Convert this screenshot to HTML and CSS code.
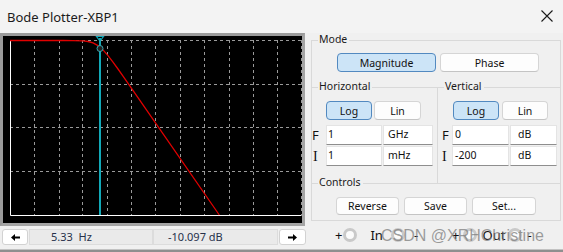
FILE: index.html
```html
<!DOCTYPE html>
<html>
<head>
<meta charset="utf-8">
<link rel="stylesheet" href="styles.css">
</head>
<body>
<div class="win">
  <div class="titlebar">
    <span class="title">Bode Plotter-XBP1</span>
    <svg class="close" width="12" height="12" viewBox="0 0 12 12"><path d="M0.5 0.5L11.5 11.5M11.5 0.5L0.5 11.5" stroke="#1a1a1a" stroke-width="1.1" fill="none"/></svg>
  </div>
  <div class="main">
    <div class="left">
      <div class="plot">
        <svg width="299" height="187" viewBox="0 0 299 187">
          <g stroke="#9a9a9a" stroke-width="1" stroke-dasharray="3 3" fill="none">
            <path d="M7 4.5H298.5M7 48.5H298.5M7 91.5H298.5M7 135.5H298.5"/>
            <path d="M31.5 4V179M56.5 4V179M79.5 4V179M104.5 4V179M128.5 4V179M152.5 4V179M177.5 4V179M201.5 4V179M226.5 4V179M250.5 4V179M274.5 4V179M298.5 4V179"/>
          </g>
          <path d="M7.5 4V179.5H298.5" stroke="#ffffff" stroke-width="1" fill="none"/>
          <path d="M7 4.5L60 4.5L70 4.6L80 4.9L85 5.5L90 6.9L95 9.6L100 13.9L105 19.6L110 26.1L115 33L120 40.1L127 50.1L140 68.9L216.3 179" stroke="#e00000" stroke-width="1.3" fill="none"/>
          <rect x="96" y="2" width="2" height="177" fill="#12a9b8"/>
          <path d="M93.5 0.5H100.5L97 5Z" stroke="#12a9b8" stroke-width="1.2" fill="none"/>
          <circle cx="97" cy="12.5" r="3" stroke="#3aa7b0" stroke-width="1" fill="#222"/>
        </svg>
      </div>
      <div class="readout">
        <div class="arrow"><svg width="9" height="7" viewBox="0 0 9 7"><path d="M0 3.5L4 0V2.4H9V4.6H4V7Z" fill="#000"/></svg></div>
        <div class="field f1">5.33&nbsp; Hz</div>
        <div class="field f2">-10.097 dB</div>
        <div class="arrow right"><svg width="9" height="7" viewBox="0 0 9 7"><path d="M9 3.5L5 0V2.4H0V4.6H5V7Z" fill="#000"/></svg></div>
      </div>
    </div>
    <div class="right">
      <div class="panel">
        <div class="hdr"><span>Mode</span></div>
        <div class="mode">
          <div class="btn on">Magnitude</div>
          <div class="btn">Phase</div>
        </div>
        <div class="hv">
          <div class="col h">
            <div class="hdr"><span>Horizontal</span></div>
            <div class="loglin">
              <div class="btn on b-log">Log</div>
              <div class="btn b-lin">Lin</div>
            </div>
            <div class="inrow">
              <span class="lbl">F</span>
              <div class="in val">1</div>
              <div class="in unit">GHz</div>
            </div>
            <div class="inrow second">
              <span class="lbl serif">I</span>
              <div class="in val">1</div>
              <div class="in unit">mHz</div>
            </div>
          </div>
          <div class="col v">
            <div class="hdr"><span>Vertical</span></div>
            <div class="loglin">
              <div class="btn on b-log">Log</div>
              <div class="btn b-lin">Lin</div>
            </div>
            <div class="inrow">
              <span class="lbl">F</span>
              <div class="in val">0</div>
              <div class="in unit">dB</div>
            </div>
            <div class="inrow second">
              <span class="lbl serif">I</span>
              <div class="in val">-200</div>
              <div class="in unit">dB</div>
            </div>
          </div>
        </div>
        <div class="hdr"><span>Controls</span></div>
        <div class="ctl">
          <div class="btn w63">Reverse</div>
          <div class="btn w63">Save</div>
          <div class="btn w64">Set...</div>
        </div>
      </div>
      <div class="terms">
        <span class="t-plus">+</span>
        <span class="term c1"></span>
        <span class="t-in">In</span>
        <span class="term c2"></span>
        <span class="t-minus">-</span>
        <span class="t-plus2">+</span>
        <span class="term c3"></span>
        <span class="t-out">Out</span>
        <span class="term c4"></span>
        <span class="t-minus2">-</span>
      </div>
    </div>
  </div>
  <div class="foot"></div>
  <div class="wm">CSDN @XRHChristine</div>
</div>
</body>
</html>
```

FILE: styles.css
```css
* { box-sizing: border-box; }

body {
  margin: 0;
  width: 563px;
  height: 252px;
  overflow: hidden;
  background: #f0f0f0;
  font-family: "Noto Sans", sans-serif;
  font-size: 10.5px;
  color: #1a1a1a;
}

.win {
  position: relative;
  width: 563px;
  height: 252px;
  display: flex;
  flex-direction: column;
}

.titlebar {
  height: 33px;
  flex: none;
  background: #f3f3f3;
  display: flex;
  align-items: center;
  justify-content: space-between;
  padding: 0 10px 0 7px;
}

.title {
  font-size: 13px;
  color: #1b1b1b;
}

.close {
  display: block;
  margin-top: -2px;
}

.main {
  flex: 1;
  display: flex;
}

.left {
  width: 310px;
  flex: none;
}

.plot {
  width: 305px;
  height: 193px;
  border: 3px solid #a4a4a4;
  border-top-color: #9a9a9a;
  border-left-color: #9a9a9a;
  background: #000;
}

.plot svg { display: block; }

.readout {
  display: flex;
  margin-top: 3px;
  height: 16px;
}

.arrow {
  width: 26px;
  height: 16px;
  margin-left: 2px;
  background: #fff;
  border: 1px solid #d2d2d2;
  border-radius: 3px;
  display: flex;
  align-items: center;
  justify-content: center;
}

.arrow.right {
  width: 27px;
  margin-left: 1px;
}

.field {
  height: 16px;
  background: #eaeaea;
  border: 1px solid #dcdcdc;
  line-height: 10px;
  font-size: 11px;
  color: #27314a;
  padding-top: 2px;
}

.f1 { width: 124px; margin-left: 1px; padding-left: 21px; }
.f2 { width: 125px; padding-left: 14px; }

.right {
  width: 253px;
  flex: none;
  display: flex;
  flex-direction: column;
}

.panel {
  margin: 7px 0 0 1px;
  width: 250px;
  border: 1px solid #d9d9d9;
  border-top: none;
  padding-bottom: 5px;
  display: flex;
  flex-direction: column;
}

.hdr {
  display: flex;
  align-items: center;
  height: 15px;
  margin-top: -7px;
}

.hdr::before {
  content: "";
  width: 6px;
  border-top: 1px solid #d9d9d9;
}

.hdr::after {
  content: "";
  flex: 1;
  border-top: 1px solid #d9d9d9;
}

.hdr span {
  align-self: flex-start;
  line-height: 13px;
  padding: 0 2px 0 1px;
}

.btn {
  height: 19px;
  background: #fdfdfd;
  border: 1px solid #d5d5d5;
  border-bottom-color: #c4c4c4;
  border-radius: 4px;
  display: flex;
  align-items: center;
  justify-content: center;
  color: #111;
}

.btn.on {
  background: #cce4f7;
  border-color: #5289c0;
}

.mode {
  display: flex;
  gap: 4px;
  margin: 5px 0 0 25px;
}

.mode .btn { width: 99px; }

.hv {
  display: flex;
  margin-top: 15px;
  padding-bottom: 0;
}

.col {
  display: flex;
  flex-direction: column;
  padding-bottom: 17px;
}

.col.h {
  width: 126px;
  border-right: 1px solid #d9d9d9;
}

.col.v { flex: 1; }

.loglin {
  display: flex;
  margin-top: 6px;
}

.col.h .loglin { margin-left: 14px; gap: 2px; }
.col.v .loglin { margin-left: 15px; gap: 3px; }

.b-log { width: 46px; }
.col.h .b-lin { width: 47px; }
.col.v .b-lin { width: 46px; }

.inrow {
  display: flex;
  height: 20px;
  margin-top: 5px;
  gap: 1px;
}

.inrow.second { margin-top: 1px; }

.lbl {
  width: 14px;
  font-size: 13px;
  line-height: 20px;
  color: #111;
}

.col.v .lbl {
  padding-left: 4px;
  margin-right: -1px;
}

.col.h .lbl { margin-right: -1px; }

.lbl.serif {
  font-family: "Liberation Serif", serif;
  font-size: 14px;
  padding-top: 1px;
}

.col.h .lbl.serif { padding-left: 1px; }

.in {
  height: 20px;
  background: #fff;
  border: 1px solid #e4e4e4;
  border-bottom-color: #8e8e8e;
  line-height: 16px;
  color: #111;
}

.col.h .val { width: 56px; padding-left: 1px; }
.col.h .unit { width: 50px; padding-left: 4px; }
.col.v .val { width: 57px; padding-left: 2px; }
.col.v .unit { width: 47px; padding-left: 7px; }

.ctl {
  display: flex;
  gap: 5px;
  margin: 6px 0 0 24px;
}

.ctl .btn { height: 18px; }
.w63 { width: 63px; }
.w64 { width: 64px; }

.terms {
  flex: 1;
  display: flex;
  align-items: center;
  padding-left: 25px;
  font-size: 13px;
  color: #111;
}

.term {
  width: 14px;
  height: 14px;
  border-radius: 50%;
  background: #fbfbfb;
  border: 3px solid #c9c9c9;
  flex: none;
}

.c1 { margin-left: 1px; }
.t-in { margin-left: 13px; }
.c2 { margin-left: 8px; }
.t-minus { margin-left: 9px; }
.t-plus2 { margin-left: 34px; }
.c3 { margin-left: 3px; }
.t-out { margin-left: 6px; }
.c4 { margin-left: 3px; }
.t-minus2 { margin-left: 5px; }

.foot {
  height: 3px;
  flex: none;
  background: #8f8f8f;
  border-top: 1px solid #c2c2c2;
}

.wm {
  position: absolute;
  left: 381px;
  top: 228px;
  font-family: "Liberation Sans", sans-serif;
  font-size: 16px;
  line-height: 16px;
  color: rgba(125, 125, 125, 0.75);
  white-space: nowrap;
}
```
